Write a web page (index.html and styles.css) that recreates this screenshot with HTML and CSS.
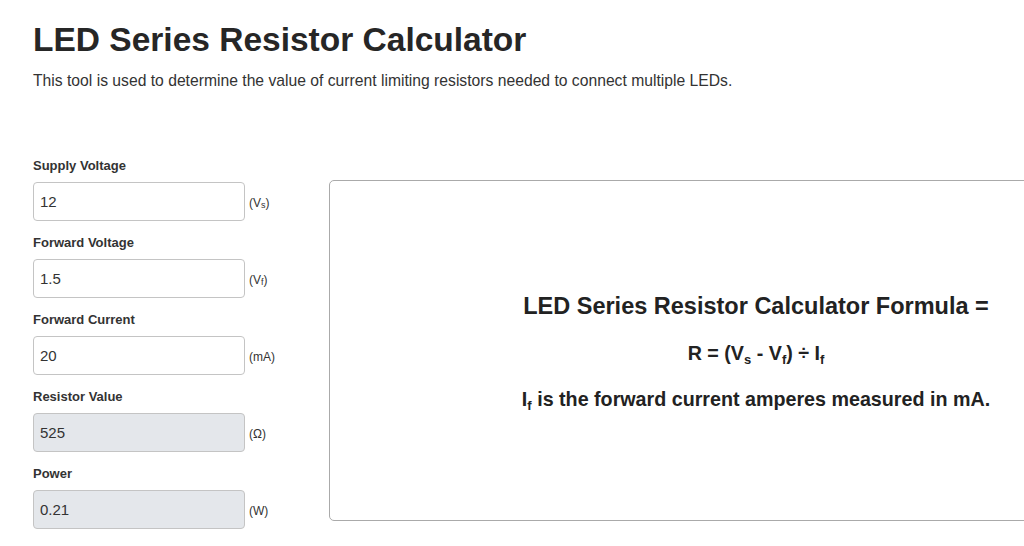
FILE: index.html
```html
<!DOCTYPE html>
<html lang="en">
<head>
    <meta charset="UTF-8">
    <meta name="viewport" content="width=device-width, initial-scale=1.0">
    <title>LED Series Resistor Calculator</title>
    <link rel="stylesheet" href="styles.css">
</head>
<body>
    <div class="page">
        <h1 class="title">LED Series Resistor Calculator</h1>
        <p class="intro">This tool is used to determine the value of current limiting resistors needed to connect multiple LEDs.</p>

        <div class="calc">
            <div class="fields">
                <div class="field">
                    <label>Supply Voltage</label>
                    <div class="row">
                        <input type="text" value="12">
                        <span class="unit">(V<sub>s</sub>)</span>
                    </div>
                </div>
                <div class="field">
                    <label>Forward Voltage</label>
                    <div class="row">
                        <input type="text" value="1.5">
                        <span class="unit">(V<sub>f</sub>)</span>
                    </div>
                </div>
                <div class="field">
                    <label>Forward Current</label>
                    <div class="row">
                        <input type="text" value="20">
                        <span class="unit">(mA)</span>
                    </div>
                </div>
                <div class="field">
                    <label>Resistor Value</label>
                    <div class="row">
                        <input type="text" value="525" readonly>
                        <span class="unit">(Ω)</span>
                    </div>
                </div>
                <div class="field">
                    <label>Power</label>
                    <div class="row">
                        <input type="text" value="0.21" readonly>
                        <span class="unit">(W)</span>
                    </div>
                </div>
            </div>

            <div class="formula">
                <h3>LED Series Resistor Calculator Formula =</h3>
                <p class="eq">R = (V<sub>s</sub> - V<sub>f</sub>) ÷ I<sub>f</sub></p>
                <p class="note">I<sub>f</sub> is the forward current amperes measured in mA.</p>
            </div>
        </div>
    </div>
</body>
</html>
```

FILE: styles.css
```css
* {
    box-sizing: border-box;
}

html, body {
    overflow: hidden;
}

body {
    margin: 0;
    font-family: 'Liberation Sans', Arial, sans-serif;
    color: #333;
    background: #fff;
}

.page {
    padding: 20px 0 0 33px;
}

.title {
    margin: 0;
    font-size: 33.5px;
    line-height: 1.2;
    font-weight: bold;
    color: #262626;
}

.intro {
    margin: 10px 0 0;
    font-size: 15.7px;
    line-height: 1.4;
}

.calc {
    display: flex;
    align-items: flex-start;
    margin-top: 65px;
}

.fields {
    width: 296px;
    flex-shrink: 0;
}

.field {
    margin-bottom: 13px;
}

.field label {
    display: block;
    height: 18px;
    margin-bottom: 7px;
    font-size: 13px;
    line-height: 18px;
    font-weight: bold;
}

.row {
    display: flex;
    align-items: center;
}

.row input {
    width: 212px;
    height: 39px;
    padding: 0 6px;
    border: 1px solid #c4c4c4;
    border-radius: 4px;
    font-family: inherit;
    font-size: 15px;
    color: #333;
    background: #fff;
}

.row input[readonly] {
    background: #e4e7eb;
}

.unit {
    margin: 2px 0 0 4px;
    font-size: 12px;
}

.unit sub {
    font-size: 9px;
    vertical-align: -1px;
}

.formula {
    flex-shrink: 0;
    width: 854px;
    height: 341px;
    margin-top: 23px;
    padding-top: 4px;
    border: 1px solid #aaa;
    border-radius: 5px;
    display: flex;
    flex-direction: column;
    justify-content: center;
    align-items: center;
    text-align: center;
    color: #222;
}

.formula h3 {
    margin: 0;
    font-size: 23.5px;
    font-weight: bold;
}

.formula p {
    margin: 0;
    font-size: 19.7px;
    font-weight: bold;
}

.eq {
    margin-top: 22px !important;
}

.note {
    margin-top: 21px !important;
}

.formula sub {
    font-size: 13px;
    vertical-align: -4px;
}
```
